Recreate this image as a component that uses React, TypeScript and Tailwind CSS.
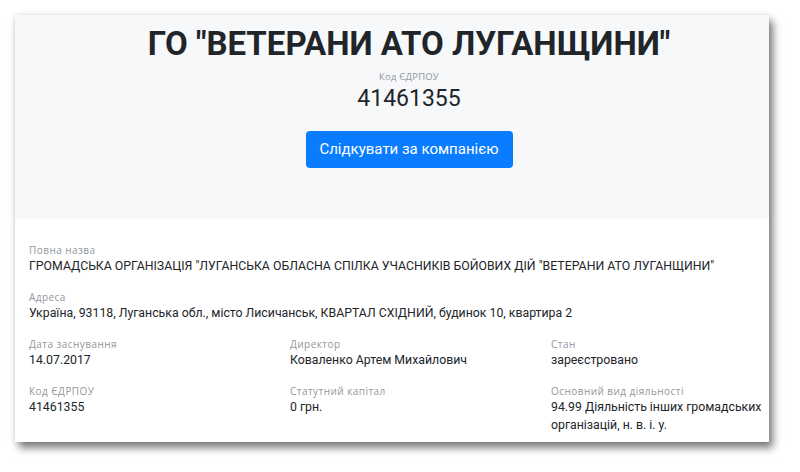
import React from 'react';

const font = { fontFamily: 'Roboto, "Noto Sans", sans-serif' };
const labelFont = { fontFamily: '"Open Sans", "Noto Sans", sans-serif' };

interface FieldProps {
  label: string;
  value: string;
  className?: string;
}

const Field: React.FC<FieldProps> = ({ label, value, className }) => (
  <div className={className ?? 'mb-[15px]'}>
    <div className="text-[10px] leading-[14px] tracking-[0.45px] text-[#92979d]" style={labelFont}>
      {label}
    </div>
    <div className="text-[12.3px] leading-[18px] text-[#212529]">{value}</div>
  </div>
);

export default function App() {
  return (
    <div className="min-h-[472px] w-[800px] bg-white pt-[15px] pl-[15px]" style={font}>
      <div className="w-[754px] bg-white shadow-[4px_6px_8px_rgba(0,0,0,0.5),0_0_5px_rgba(0,0,0,0.12)]">
        <div className="flex h-[204px] flex-col items-center bg-[#f7f8fa] pl-[34px] pt-[9px]">
          <h1 className="text-[33px] font-bold leading-[40px] text-[#212529]">
            ГО "ВЕТЕРАНИ АТО ЛУГАНЩИНИ"
          </h1>
          <div
            className="mt-[7px] text-[9.5px] leading-[12px] tracking-[0.2px] text-[#92979d]"
            style={labelFont}
          >
            Код ЄДРПОУ
          </div>
          <div className="mt-[1px] text-[23px] leading-[30px] text-[#212529]">41461355</div>
          <button className="mt-[17px] h-[37px] w-[207px] rounded-[4px] bg-[#0a7cff] text-[15px] text-white">
            Слідкувати за компанією
          </button>
        </div>
        <div className="pl-[14px] pt-[24px] pb-[8px]">
          <Field
            label="Повна назва"
            value={'ГРОМАДСЬКА ОРГАНІЗАЦІЯ "ЛУГАНСЬКА ОБЛАСНА СПІЛКА УЧАСНИКІВ БОЙОВИХ ДІЙ "ВЕТЕРАНИ АТО ЛУГАНЩИНИ"'}
          />
          <Field
            label="Адреса"
            value="Україна, 93118, Луганська обл., місто Лисичанськ, КВАРТАЛ СХІДНИЙ, будинок 10, квартира 2"
          />
          <div className="grid grid-cols-[261px_261px_216px]">
            <Field label="Дата заснування" value="14.07.2017" />
            <Field label="Директор" value="Коваленко Артем Михайлович" />
            <Field label="Стан" value="зареєстровано" />
            <Field label="Код ЄДРПОУ" value="41461355" className="" />
            <Field label="Статутний капітал" value="0 грн." className="" />
            <Field
              label="Основний вид діяльності"
              value="94.99 Діяльність інших громадських організацій, н. в. і. у."
              className=""
            />
          </div>
        </div>
      </div>
    </div>
  );
}
